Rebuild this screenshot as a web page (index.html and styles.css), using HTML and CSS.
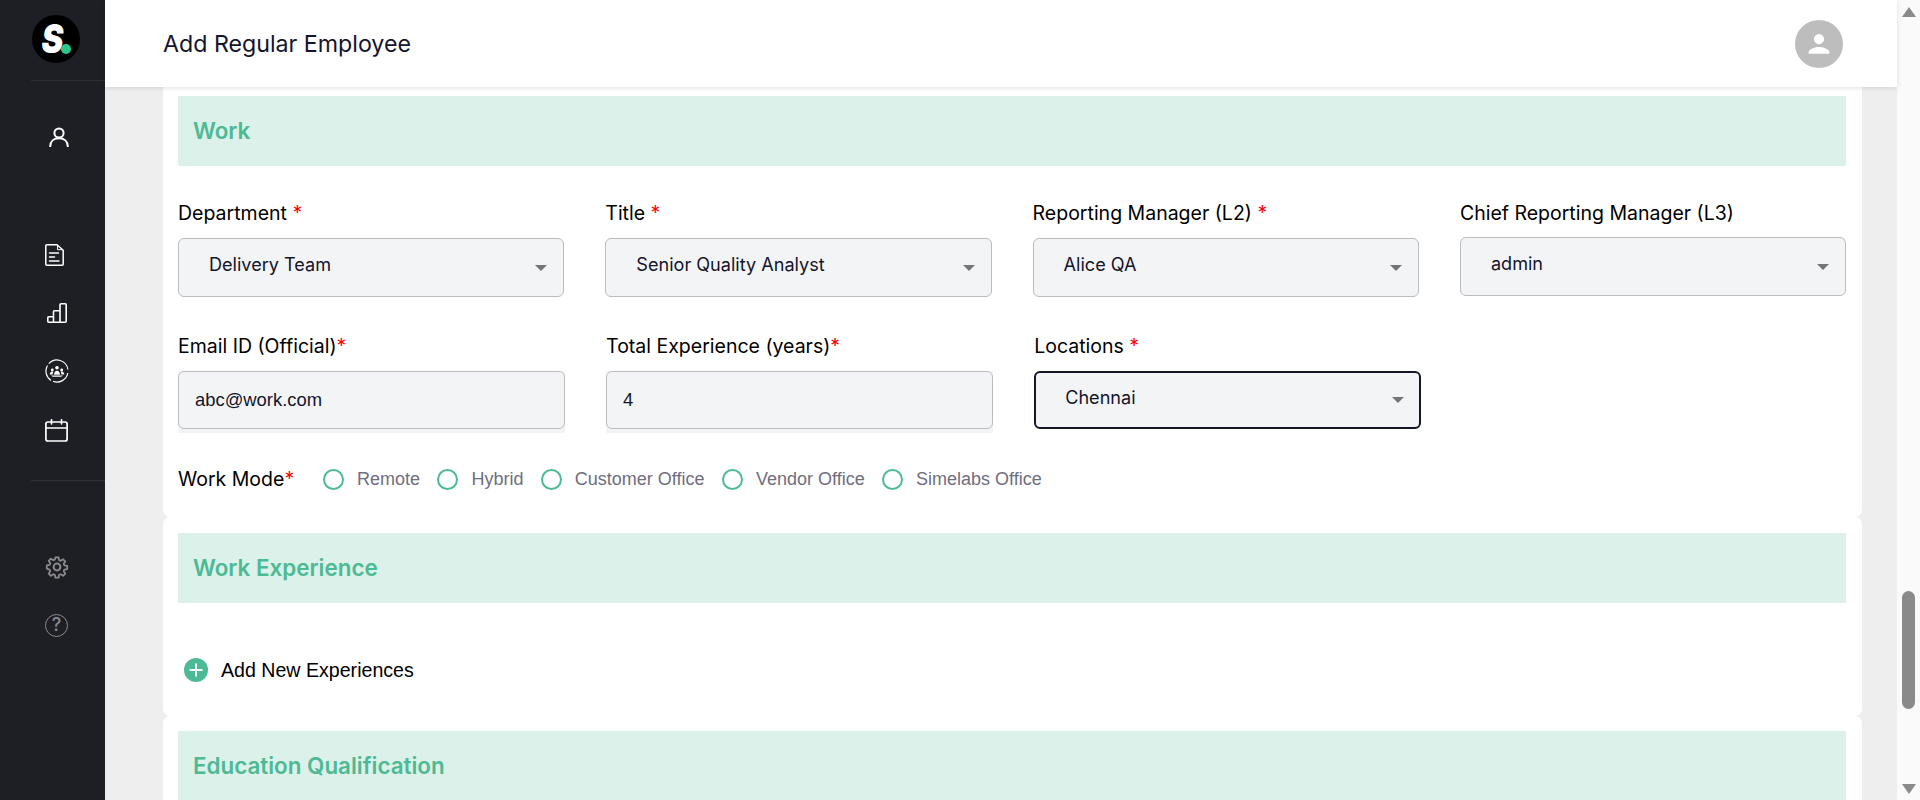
FILE: index.html
```html
<!DOCTYPE html>
<html lang="en">
<head>
<meta charset="utf-8">
<title>Add Regular Employee</title>
<link rel="stylesheet" href="styles.css">
</head>
<body>
<div class="app">
  <aside class="sidebar">
    <div class="logo-wrap">
      <div class="logo"><span class="logo-s">S</span><span class="logo-dot"></span></div>
    </div>
    <nav class="nav-top">
      <svg class="ico ico-person" viewBox="0 0 20 20" width="20" height="20" fill="none" stroke="#fff" stroke-width="2" stroke-linecap="round"><circle cx="10" cy="6" r="4.6"/><path d="M1.2 19.5c0-5.200 3.600-8.300 8.800-8.300s8.800 3.100 8.800 8.300"/></svg>
      <svg class="ico ico-doc" viewBox="0 0 19 22" width="19" height="22" fill="none" stroke="#fff" stroke-width="1.500" stroke-linejoin="round" stroke-linecap="round"><path d="M1.800.8h10.200l6.200 5.400v14a1 1 0 0 1-1 1H1.800a1 1 0 0 1-1-1V1.800a1 1 0 0 1 1-1z"/><path d="M12.500 1.500v4.200h5" stroke-width="1"/><path d="M4.500 9h9M4.500 13h5M4.500 17h9.500"/></svg>
      <svg class="ico ico-bars" viewBox="0 0 20 20" width="20" height="20" fill="none" stroke="#fff" stroke-width="1.600" stroke-linejoin="round"><path d="M13 1.800a1 1 0 0 1 1-1h4.200a1 1 0 0 1 1 1v16.400a1 1 0 0 1-1 1H1.800a1 1 0 0 1-1-1v-3.400a1 1 0 0 1 1-1h4.700V8.800a1 1 0 0 1 1-1H13z"/><path d="M6.500 13.800v5.400M13 7.800v11.400"/></svg>
      <svg class="ico ico-team" viewBox="0 0 24 24" width="24" height="24" fill="none" stroke="#fff"><path stroke-width="1.200" d="M3.800 4.700A11 11 0 0 1 22.900 10.500M22.800 14A11 11 0 0 1 8 22.300M6 21.400A11 11 0 0 1 2.500 6.500"/><g fill="#fff" stroke="none"><circle cx="12" cy="8.800" r="1.800"/><circle cx="7.300" cy="11" r="1.400"/><circle cx="16.700" cy="11" r="1.400"/><path d="M9 15.800c0-2.300 1.200-4 3-4s3 1.700 3 4z"/><path d="M4.800 15.500c0-1.600.9-3 2.500-3 .4 0 .8.100 1.100.3-.6.800-.8 1.700-.8 2.700z"/><path d="M19.200 15.500c0-1.600-.9-3-2.500-3-.4 0-.8.100-1.100.3.600.8.800 1.700.8 2.700z"/><path d="M6 16.400h12l-1.800 1.300H7.800z"/></g></svg>
      <svg class="ico ico-cal" viewBox="0 0 23 23" width="23" height="23" fill="none" stroke="#fff" stroke-width="1.700" stroke-linecap="round"><rect x=".9" y="3" width="21.200" height="19" rx="2"/><path d="M.9 9h21.200M6.500.8v4M16.500.8v4"/></svg>
    </nav>
    <div class="nav-bottom">
      <svg class="ico ico-gear" viewBox="0 0 24 24" width="24" height="24" fill="none" stroke="#8b8b8e" stroke-width="2" stroke-linejoin="round"><circle cx="12" cy="12" r="3.400"/><path d="M10.200 1h3.600l.6 3.200 1.800.8 2.700-1.800 2.500 2.500-1.800 2.700.8 1.800 3.200.6v3.600l-3.200.6-.8 1.800 1.800 2.700-2.500 2.500-2.700-1.800-1.800.8-.6 3.200h-3.600l-.6-3.200-1.800-.8-2.700 1.800-2.500-2.500 1.800-2.700-.8-1.800L.4 13.800v-3.600l3.200-.6.8-1.800-1.800-2.700 2.500-2.500 2.700 1.800 1.800-.8z" transform="translate(12 12) scale(.88) translate(-12 -12)"/></svg>
      <div class="help"><span>?</span></div>
    </div>
  </aside>

  <main class="main">
    <header class="topbar">
      <h1 class="page-title">Add Regular Employee</h1>
      <div class="avatar">
        <svg viewBox="0 0 24 24" width="30" height="30" fill="#fff"><circle cx="12" cy="8" r="4.100"/><path d="M3.700 19.800v-1.200c0-2.600 5.500-4.200 8.300-4.200s8.300 1.600 8.300 4.200v1.200z"/></svg>
      </div>
    </header>

    <div class="content">
      <section class="card card-work">
        <h2 class="band">Work</h2>

        <div class="row row-one">
          <div class="field">
            <label class="lbl">Department <span class="req">*</span></label>
            <div class="select"><span>Delivery Team</span><i class="caret"></i></div>
          </div>
          <div class="field">
            <label class="lbl">Title <span class="req">*</span></label>
            <div class="select"><span>Senior Quality Analyst</span><i class="caret"></i></div>
          </div>
          <div class="field">
            <label class="lbl">Reporting Manager (L2) <span class="req">*</span></label>
            <div class="select"><span>Alice QA</span><i class="caret"></i></div>
          </div>
          <div class="field field-chief">
            <label class="lbl">Chief Reporting Manager (L3)</label>
            <div class="select"><span>admin</span><i class="caret"></i></div>
          </div>
        </div>

        <div class="row row-two">
          <div class="field">
            <label class="lbl">Email ID (Official)<span class="req">*</span></label>
            <div class="input-shell"><div class="input">abc@work.com</div></div>
          </div>
          <div class="field">
            <label class="lbl">Total Experience (years)<span class="req">*</span></label>
            <div class="input-shell"><div class="input">4</div></div>
          </div>
          <div class="field">
            <label class="lbl">Locations <span class="req">*</span></label>
            <div class="select select-focus"><span>Chennai</span><i class="caret"></i></div>
          </div>
        </div>

        <div class="mode-row">
          <span class="lbl mode-lbl">Work Mode<span class="req">*</span></span>
          <div class="radio-item"><i class="radio"></i>Remote</div>
          <div class="radio-item"><i class="radio"></i>Hybrid</div>
          <div class="radio-item"><i class="radio"></i>Customer Office</div>
          <div class="radio-item"><i class="radio"></i>Vendor Office</div>
          <div class="radio-item"><i class="radio"></i>Simelabs Office</div>
        </div>
      </section>

      <section class="card card-exp">
        <h2 class="band">Work Experience</h2>
        <div class="add-row">
          <svg viewBox="0 0 24 24" width="24" height="24"><circle cx="12" cy="12" r="12" fill="#4cba94"/><path d="M12 5.500v13M5.500 12h13" stroke="#fff" stroke-width="2"/></svg>
          <span>Add New Experiences</span>
        </div>
      </section>

      <section class="card card-edu">
        <h2 class="band">Education Qualification</h2>
      </section>
    </div>
  </main>

  <div class="scrollbar">
    <i class="sb-up"></i>
    <div class="sb-track"><div class="sb-thumb"></div></div>
    <i class="sb-down"></i>
  </div>
</div>
</body>
</html>
```

FILE: styles.css
```css
* { box-sizing: border-box; }
html, body { margin: 0; height: 800px; overflow: hidden; }
body { font-family: Inter, "Liberation Sans", sans-serif; color: #14142b; }

.app { display: flex; height: 800px; width: 1920px; overflow: hidden; }

/* Sidebar */
.sidebar { width: 105px; flex: none; background: #1e1f24; display: flex; flex-direction: column; }
.logo-wrap { height: 81px; margin-left: 31px; border-bottom: 1px solid #2d2e3a; padding-top: 15px; }
.logo { position: relative; width: 48px; height: 48px; border-radius: 50%; background: #000; margin-left: 1px; display: flex; justify-content: center; align-items: center; }
.logo-s { display: inline-block; transform: scaleX(.82); font-family: Inter, sans-serif; font-weight: 900; font-style: italic; font-size: 40px; line-height: 48px; color: #fff; margin: -1px 7px 0 0; }
.logo-dot { position: absolute; left: 29px; top: 29px; width: 9.500px; height: 9.500px; border-radius: 50%; background: #2ac78f; }
.nav-top { height: 400px; margin-left: 31px; border-bottom: 1px solid #323337; }
.ico { display: block; }
.ico-person { margin: 46px 0 0 18px; }
.ico-doc { margin: 97px 0 0 14px; }
.ico-bars { margin: 37px 0 0 16px; }
.ico-team { margin: 36px 0 0 14px; }
.ico-cal { margin: 36px 0 0 14px; }
.nav-bottom { padding: 74px 0 0 45px; }
.help { margin-top: 35px; width: 23px; height: 23px; border: 1.700px solid #8b8b8e; border-radius: 50%; color: #8b8b8e; font-size: 18px; font-weight: 500; line-height: 20px; text-align: center; }

/* Main */
.main { flex: 1; min-width: 0; background: #eeeeee; display: flex; flex-direction: column; }
.topbar { height: 87px; flex: none; background: #fff; display: flex; align-items: center; justify-content: space-between; padding: 0 54px 0 58px; box-shadow: 0 1px 5px rgba(0,0,0,.12); position: relative; z-index: 2; }
.page-title { margin: 1px 0 0; font-size: 23.200px; font-weight: 400; color: #14142b; }
.avatar { width: 48px; height: 48px; border-radius: 50%; background: #bdbdbd; display: flex; align-items: center; justify-content: center; }
.content { flex: 1; overflow: hidden; padding: 0 35px 0 58px; }

.card { background: #fff; border-radius: 7px; padding: 0 16px 0 15px; }
.card-work { height: 430px; padding-top: 9px; border-radius: 0 0 7px 7px; }
.card-exp { height: 199px; padding-top: 16px; }
.card-edu { height: 200px; padding-top: 15px; }
.band { margin: 0; height: 70px; background: #dcf1e9; color: #4cba94; font-size: 22.400px; font-weight: 600; line-height: 69px; padding-left: 15px; }

/* Form rows */
.row { display: flex; }
.row-one { gap: 41px; margin-top: 34px; }
.row-two { gap: 41.300px; margin-top: 36px; }
.field { width: 386.300px; flex: none; }
.row-two .field { width: 386.800px; }
.lbl { display: block; font-size: 19.500px; font-weight: 400; line-height: 26px; color: #000; margin-bottom: 12px; }
.req { color: #ff0000; }
.field-chief .lbl { margin-bottom: 11px; }
.select { position: relative; height: 59px; border: 1px solid #bcbcc0; border-radius: 6px; background: #f3f4f6; padding: 10px 0 0 30px; font-size: 18.100px; line-height: 30px; color: #14142b; }
.row-two .select { height: 58px; }
.select-focus { border: 2px solid #14142b; padding: 9px 0 0 29px; }
.caret { position: absolute; right: 16px; top: 26px; width: 0; height: 0; border-left: 6px solid transparent; border-right: 6px solid transparent; border-top: 6px solid #757575; }
.select-focus .caret { right: 15px; top: 24px; }
.input-shell { height: 62px; background: #f3f4f6; }
.input { height: 58px; border: 1px solid #bcbcc0; border-radius: 6px; background: #f3f4f6; padding: 13px 0 0 16px; font-family: "Liberation Sans", Arial, sans-serif; font-size: 18.400px; line-height: 30px; color: #14142b; }

/* Work mode */
.mode-row { display: flex; align-items: center; margin-top: 33px; height: 26px; }
.mode-lbl { width: 145px; flex: none; margin: 0; }
.radio-item { display: flex; align-items: center; gap: 13px; margin-right: 17.400px; font-family: "Liberation Sans", Arial, sans-serif; font-size: 18px; color: #6e6e80; }
.radio { width: 21px; height: 21px; border-radius: 50%; border: 2px solid #4cba94; }

.add-row { display: flex; align-items: center; gap: 13px; margin: 54px 0 0 6px; height: 26px; font-family: "Liberation Sans", Arial, sans-serif; font-size: 19.600px; color: #000; }

/* Scrollbar */
.scrollbar { position: relative; width: 23px; flex: none; background: #fafafa; }
.sb-up, .sb-down { position: absolute; left: 5px; width: 0; height: 0; border-left: 7px solid transparent; border-right: 7px solid transparent; }
.sb-up { top: 7px; border-bottom: 10px solid #8a8a8a; }
.sb-down { top: 784px; border-top: 10px solid #8a8a8a; }
.sb-track { position: absolute; inset: 0; }
.sb-thumb { position: absolute; left: 5px; top: 591px; width: 13px; height: 118px; border-radius: 7px; background: #8a8a8a; }
```
